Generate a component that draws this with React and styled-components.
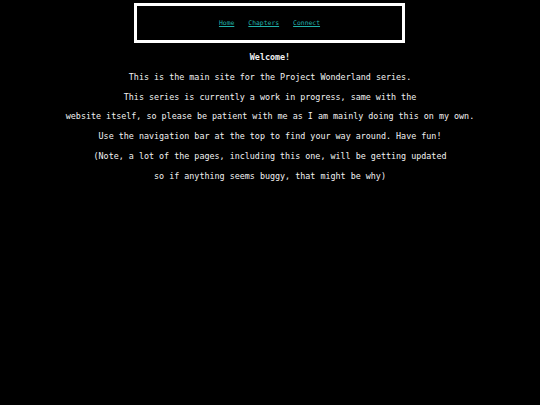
import React from "react";
import styled, { createGlobalStyle } from "styled-components";

const Global = createGlobalStyle`
  html, body { margin: 0; padding: 0; background: #000; }
  body { font-family: "DejaVu Sans Mono", "Liberation Mono", monospace; color: #fff; }
`;

const Page = styled.div`
  width: 540px;
  min-height: 405px;
  background: #000;
  padding-top: 3px;
  box-sizing: border-box;
`;

const Nav = styled.nav`
  box-sizing: border-box;
  width: 271px;
  height: 40px;
  margin: 0 0 0 134px;
  border: 3px solid #fff;
  display: flex;
  align-items: center;
  justify-content: center;
  gap: 14px;
`;

const NavLink = styled.a`
  font-family: "DejaVu Sans Mono", monospace;
  font-size: 6.4px;
  color: #20b2aa;
  text-decoration: underline;
  cursor: pointer;
`;

const Main = styled.main`
  padding-top: 5px;
  display: flex;
  flex-direction: column;
  align-items: center;
`;

const Line = styled.p`
  margin: 0;
  font-size: 8.4px;
  line-height: 19.8px;
  text-align: center;
  white-space: pre;
  font-weight: ${(p) => (p.$bold ? 700 : 400)};
  color: #f2f2f2;
`;

const lines = [
  "This is the main site for the Project Wonderland series.",
  "This series is currently a work in progress, same with the",
  "website itself, so please be patient with me as I am mainly doing this on my own.",
  "Use the navigation bar at the top to find your way around. Have fun!",
  "(Note, a lot of the pages, including this one, will be getting updated",
  "so if anything seems buggy, that might be why)",
];

export default function App() {
  return (
    <>
      <Global />
      <Page>
        <Nav>
          <NavLink>Home</NavLink>
          <NavLink>Chapters</NavLink>
          <NavLink>Connect</NavLink>
        </Nav>
        <Main>
          <Line $bold>Welcome!</Line>
          {lines.map((l) => (
            <Line key={l}>{l}</Line>
          ))}
        </Main>
      </Page>
    </>
  );
}
